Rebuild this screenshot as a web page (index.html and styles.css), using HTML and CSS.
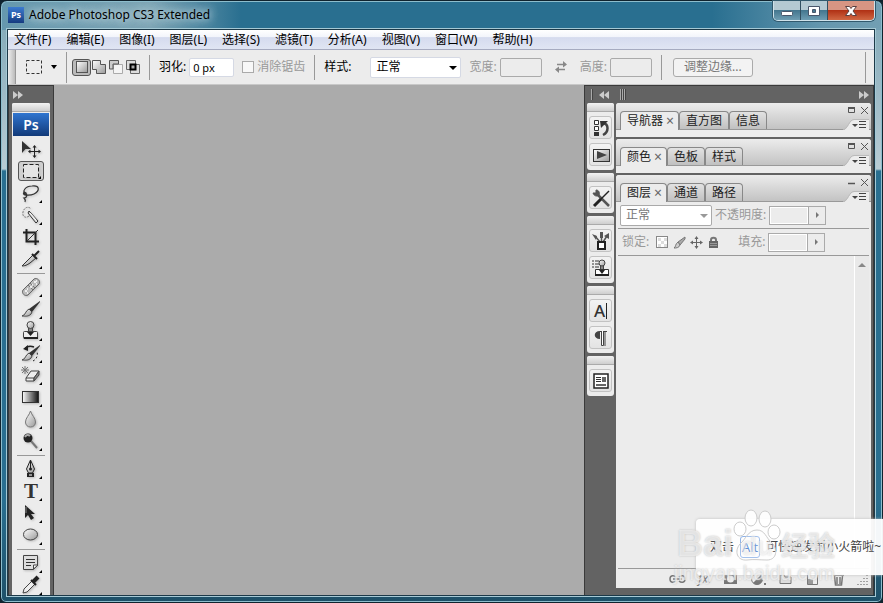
FILE: index.html
```html
<!DOCTYPE html>
<html lang="zh-CN">
<head>
    <meta charset="UTF-8">
    <meta name="viewport" content="width=device-width, initial-scale=1.0">
    <title>Adobe Photoshop CS3 Extended</title>
    <link rel="stylesheet" href="styles.css">
</head>
<body>
    <!-- Shared gradients -->
    <svg class="defs" width="0" height="0" aria-hidden="true">
        <defs>
            <linearGradient id="ramp"><stop offset="0" stop-color="#fff"/><stop offset="1" stop-color="#111"/></linearGradient>
            <linearGradient id="metal" x1="0" y1="0" x2="1" y2="1"><stop offset="0" stop-color="#fff"/><stop offset="1" stop-color="#999"/></linearGradient>
        </defs>
    </svg>

    <div class="window">
        <header class="titlebar">
            <span class="app-icon">Ps</span>
            <h1>Adobe Photoshop CS3 Extended</h1>
            <div class="window-controls">
                <button type="button" class="win-btn" aria-label="最小化"><svg width="14" height="14" viewBox="0 0 14 14"><rect x="1.500" y="7.500" width="11" height="4" rx="1" fill="#fff" stroke="#49566a"/></svg></button>
                <button type="button" class="win-btn" aria-label="最大化"><svg width="14" height="14" viewBox="0 0 14 14"><path fill-rule="evenodd" d="M1.500 2.500h11v9h-11zM5.500 5.500v3h3v-3z" fill="#fff" stroke="#49566a"/></svg></button>
                <button type="button" class="win-btn win-close" aria-label="关闭"><svg width="14" height="14" viewBox="0 0 14 14"><path d="M1.500 2.500h4l1.500 2 1.500-2h4l-3.500 4.500 3.500 4.500h-4l-1.500-2-1.500 2h-4l3.500-4.500z" fill="#fff" stroke="#5b4040"/></svg></button>
            </div>
        </header>

        <div class="client">
            <nav class="menubar">
                <a href="#">文件(F)</a>
                <a href="#">编辑(E)</a>
                <a href="#">图像(I)</a>
                <a href="#">图层(L)</a>
                <a href="#">选择(S)</a>
                <a href="#">滤镜(T)</a>
                <a href="#">分析(A)</a>
                <a href="#">视图(V)</a>
                <a href="#">窗口(W)</a>
                <a href="#">帮助(H)</a>
            </nav>

            <section class="options">
                <span class="gripper"></span>
                <button type="button" class="preset" aria-label="工具预设">
                    <svg width="18" height="16" viewBox="0 0 18 16"><rect x="1.500" y="1.500" width="15" height="13" fill="none" stroke="#333" stroke-dasharray="3 2"/></svg>
                    <span class="arrow-down"></span>
                </button>
                <span class="divider tall"></span>
                <div class="modes">
                    <button type="button" class="mode selected" aria-label="新选区"><svg width="14" height="14" viewBox="0 0 14 14"><rect x="1.500" y="1.500" width="11" height="11" fill="url(#metal)" stroke="#555"/></svg></button>
                    <button type="button" class="mode" aria-label="添加到选区"><svg width="14" height="14" viewBox="0 0 14 14"><path d="M.5.5h8v4h5v9h-9v-4h-4z" fill="url(#metal)" stroke="#555"/></svg></button>
                    <button type="button" class="mode" aria-label="从选区减去"><svg width="14" height="14" viewBox="0 0 14 14"><path d="M4.500 4.500h9v9h-9z" fill="#f4f4f4" stroke="#aaa"/><path d="M.5.5h9v3.500h-5.500v5h-3.500z" fill="#ccc" stroke="#555"/></svg></button>
                    <button type="button" class="mode" aria-label="与选区交叉"><svg width="14" height="14" viewBox="0 0 14 14"><path d="M.5.5h9v9h-9zM4.500 4.500h9v9h-9z" fill="#ddd" stroke="#666"/><path d="M4.500 4.500h5v5h-5z" fill="#aaa" stroke="#000" stroke-width="2"/></svg></button>
                </div>
                <span class="divider"></span>
                <div class="field">
                    <label for="feather">羽化:</label>
                    <input type="text" id="feather" class="feather" value="0 px">
                </div>
                <div class="field check off">
                    <input type="checkbox" id="antialias" disabled>
                    <label for="antialias">消除锯齿</label>
                </div>
                <span class="divider"></span>
                <div class="field style-field">
                    <label for="style">样式:</label>
                    <span class="select"><select id="style"><option>正常</option></select></span>
                </div>
                <div class="field size off">
                    <label for="width">宽度:</label>
                    <input type="text" id="width" disabled>
                </div>
                <button type="button" class="swap" aria-label="高度和宽度互换" disabled><svg width="14" height="14" viewBox="0 0 14 14"><path d="M3 4.500h8M11 9.500H3" stroke="#888" stroke-width="1.500"/><path d="M9 1l4 3.500-4 3zM5 6.500L1 9.500l4 3.500z" fill="#888"/></svg></button>
                <div class="field size off">
                    <label for="height">高度:</label>
                    <input type="text" id="height" disabled>
                </div>
                <span class="divider"></span>
                <button type="button" class="refine" disabled>调整边缘...</button>
                <span class="divider tall last"></span>
            </section>

            <main class="workspace">
                <aside class="toolbox">
                    <button type="button" class="collapse" aria-label="展开面板"><svg width="10" height="8" viewBox="0 0 10 8"><path d="M0 0l5 4-5 4zM5 0l5 4-5 4z" fill="#ccc"/></svg></button>
                    <div class="tools">
                        <span class="handle"></span>
                        <span class="ps">Ps</span>
                        <button type="button" class="tool" aria-label="移动"><svg viewBox="0 0 22 22"><path d="M2 3v12l3.500-4H11z" fill="#333"/><path d="M14.500 8v11M9 13.500h11" stroke="#222"/><path d="M12.500 9.500l2-2.500 2 2.500zM12.500 17.500l2 2.500 2-2.500zM10.500 11.500L8 13.500l2.500 2zM18.500 11.500l2.500 2-2.500 2z" fill="#222"/></svg></button>
                        <button type="button" class="tool more selected" aria-label="矩形选框"><svg viewBox="0 0 22 22"><rect x="3.500" y="4.500" width="15" height="13" fill="#e4e4e4" stroke="#222" stroke-dasharray="4 2"/></svg></button>
                        <button type="button" class="tool more" aria-label="套索"><svg viewBox="0 0 22 22" fill="none"><path d="M6 13C1 9 6 4 12 4c8-1 8 5 2 8-4 2-8 1-9 1-3-1-1-4 1-2 2 3 0 5-2 5 1 1 2 2 1 4" stroke="#333" stroke-width="1.200"/></svg></button>
                        <button type="button" class="tool more" aria-label="快速选择"><svg viewBox="0 0 22 22"><path d="M9 12c-4 3-7 0-6-4 1-5 6-6 8-3" fill="none" stroke="#777" stroke-dasharray="2 1"/><path d="M9 7l9 10-2 2L8 9z" fill="#ddd" stroke="#333"/><path d="M10 9l6 7" stroke="#fff"/></svg></button>
                        <button type="button" class="tool" aria-label="裁剪"><svg viewBox="0 0 22 22" fill="none"><path d="M6.500 3v12.500H19M3 6.500h12.500V19" stroke="#222" stroke-width="2"/><path d="M7 15L18 4" stroke="#333"/></svg></button>
                        <button type="button" class="tool more" aria-label="切片"><svg viewBox="0 0 22 22"><path d="M2 18L13 7l3 3-6 5c-3 2-5 3-8 3z" fill="url(#metal)" stroke="#333"/><path d="M12 6l5 5M14 8l5-5" stroke="#222" stroke-width="2"/></svg></button>
                        <hr>
                        <button type="button" class="tool more" aria-label="修复画笔"><svg viewBox="0 0 22 22"><path d="M3 14L14 3c3-2 7 2 5 5L8 19c-3 2-7-2-5-5z" fill="#bbb" stroke="#666"/><path d="M8 9l5 5M10 7l5 5" stroke="#777"/><path d="M5 15h2M7 17h1M7 13h1M10 11h2M12 9h1M14 6h2M16 8h1M16 5h1" stroke="#fff" stroke-width="1.500"/></svg></button>
                        <button type="button" class="tool more" aria-label="画笔"><svg viewBox="0 0 22 22"><path d="M20 3L9 11l3 3 8-10z" fill="#333"/><path d="M9 11l3 3-1 2c-3 3-6 2-9 2 4-1 3-5 7-7z" fill="url(#metal)" stroke="#444"/></svg></button>
                        <button type="button" class="tool more" aria-label="仿制图章"><svg viewBox="0 0 22 22"><path d="M8.500 7h4v5h-4z" fill="#888" stroke="#444"/><circle cx="10.500" cy="5" r="3.500" fill="url(#metal)" stroke="#444"/><rect x="3.500" y="11.500" width="14" height="7" rx="1" fill="#eee" stroke="#444"/><path d="M4 17h14v2H4zM7 12h7l-3.500 4z" fill="#222"/></svg></button>
                        <button type="button" class="tool more" aria-label="历史记录画笔"><svg viewBox="0 0 22 22"><path d="M20 3L9 11l3 3 8-10z" fill="#333"/><path d="M9 11l3 3-1 2c-3 3-6 2-9 2 4-1 3-5 7-7z" fill="url(#metal)" stroke="#444"/><path d="M5 7c2-3 6-3 9-2" fill="none" stroke="#222" stroke-width="1.500"/><path d="M13 19c4-2 5-6 4-10" fill="none" stroke="#222" stroke-dasharray="2 2"/><path d="M8 3v6L3 7z" fill="#222"/></svg></button>
                        <button type="button" class="tool more" aria-label="橡皮擦"><svg viewBox="0 0 22 22"><path d="M6 14l5-7h8l-5 7v3H6z" fill="#eee" stroke="#444"/><path d="M14 14l5-7v4l-5 6z" fill="#888" stroke="#444"/><path d="M6 14h8" stroke="#444"/><path d="M5 2v8M1 6h8M2 3l6 6M8 3L2 9" stroke="#777"/></svg></button>
                        <button type="button" class="tool more" aria-label="渐变"><svg viewBox="0 0 22 22"><rect x="2.500" y="5.500" width="16" height="11" fill="url(#ramp)" stroke="#333"/></svg></button>
                        <button type="button" class="tool more" aria-label="模糊"><svg viewBox="0 0 22 22"><path d="M10.500 3c1 4 5 7 5 11 0 3-2 5-5 5s-5-2-5-5c0-4 4-7 5-11z" fill="url(#metal)" stroke="#777"/></svg></button>
                        <button type="button" class="tool more" aria-label="减淡"><svg viewBox="0 0 22 22"><path d="M11 11l6 7" stroke="#777" stroke-width="2"/><circle cx="8" cy="8" r="4.500" fill="#222"/><path d="M5 7c1-2 3-3 5-1" fill="none" stroke="#aaa" stroke-width="2"/></svg></button>
                        <hr>
                        <button type="button" class="tool more" aria-label="钢笔"><svg viewBox="0 0 22 22"><path d="M10.500 2l-4 9 2 4h4l2-4z" fill="url(#metal)" stroke="#222"/><path d="M10.500 3v7" stroke="#222"/><circle cx="10.500" cy="11" r="1.500" fill="#222"/><path d="M7 15h7v4H7z" fill="#222"/><path d="M9 17h3" stroke="#fff"/></svg></button>
                        <button type="button" class="tool more type" aria-label="横排文字">T</button>
                        <button type="button" class="tool more" aria-label="路径选择"><svg viewBox="0 0 22 22"><path d="M5 3v13l3-3 3 5 3-2-3-4h4z" fill="#222"/><path d="M6 5v6" stroke="#888"/></svg></button>
                        <button type="button" class="tool more" aria-label="椭圆"><svg viewBox="0 0 22 22"><ellipse cx="10.500" cy="10.500" rx="7" ry="5.500" fill="url(#metal)" stroke="#444"/></svg></button>
                        <hr>
                        <button type="button" class="tool more" aria-label="注释"><svg viewBox="0 0 22 22"><path d="M3.500 3.500h14v10l-4 4h-10z" fill="#ddd" stroke="#444"/><path d="M13.500 17v-4H18z" fill="#fff" stroke="#444"/><path d="M6 7.500h9M6 10.500h9M6 13.500h5" stroke="#333"/></svg></button>
                        <button type="button" class="tool more" aria-label="吸管"><svg viewBox="0 0 22 22"><path d="M3 19l1-4 8-8 3 3-8 8z" fill="#eee" stroke="#444"/><path d="M11 6l5 5" stroke="#222" stroke-width="2"/><path d="M13 8l5-5" stroke="#222" stroke-width="4"/></svg></button>
                    </div>
                </aside>

                <div class="canvas"></div>

                <aside class="dock">
                    <div class="dock-icons">
                        <div class="dock-head">
                            <span class="bars"></span>
                            <button type="button" class="collapse" aria-label="展开停放"><svg width="10" height="8" viewBox="0 0 10 8"><path d="M5 0L0 4l5 4zM10 0L5 4l5 4z" fill="#ccc"/></svg></button>
                        </div>
                        <div class="icon-group">
                            <span class="handle"></span>
                            <button type="button" aria-label="历史记录"><svg viewBox="0 0 20 20"><path d="M3.500 2.500h4v4h-4zM3.500 8.500h4v4h-4z" fill="#fff" stroke="#333"/><path d="M3 14h5v4H3z" fill="#333"/><path d="M12 17c6-3 6-11 0-12" fill="none" stroke="#444" stroke-width="2.500"/><path d="M9 3h8l-7 7z" fill="#333"/></svg></button>
                            <button type="button" aria-label="动作"><svg viewBox="0 0 20 20"><rect x="2.500" y="4.500" width="16" height="12" fill="url(#metal)" stroke="#333"/><path d="M6 6v8l10-4z" fill="#444"/></svg></button>
                        </div>
                        <div class="icon-group">
                            <span class="handle"></span>
                            <button type="button" aria-label="工具预设面板"><svg viewBox="0 0 20 20"><path d="M5 5l13 13" stroke="#555" stroke-width="2.500"/><path d="M2 5c1 3 4 4 6 2 1-2 0-5-3-5v3z" fill="#555" stroke="#555"/><path d="M18 3l-8 8" stroke="#222" stroke-width="1.500"/><path d="M10 11l-7 7" stroke="#222" stroke-width="3"/></svg></button>
                        </div>
                        <div class="icon-group">
                            <span class="handle"></span>
                            <button type="button" aria-label="画笔面板"><svg viewBox="0 0 20 20"><path d="M9 11L4 5M10.500 11V3M12 11l4-6" stroke="#555" stroke-width="1.500"/><path d="M1 3l5 2-1 4zM9 1h3v6H9zM13 5l5-3v6z" fill="#555"/><path d="M7 11h7v7H7z" fill="#fff" stroke="#222" stroke-width="2"/></svg></button>
                            <button type="button" aria-label="仿制源"><svg viewBox="0 0 20 20"><path d="M1 3h2M1 6h2M1 9h2M4 3h4M4 6h4M4 9h4" stroke="#333"/><path d="M9.500 7h3v5h-3z" fill="#888" stroke="#444"/><circle cx="11" cy="5" r="3" fill="url(#metal)" stroke="#444"/><path d="M4.500 11.500h13v6h-13z" fill="#fff" stroke="#333"/><path d="M4 16h14v2H4zM8 12h6l-3 4z" fill="#222"/></svg></button>
                        </div>
                        <div class="icon-group">
                            <span class="handle"></span>
                            <button type="button" aria-label="字符"><span class="char">A</span></button>
                            <button type="button" aria-label="段落"><svg viewBox="0 0 20 20"><path d="M9 3h7v1H9zM9 3v8C2 11 2 3 9 3z" fill="#444"/><path d="M10.500 3v14.500h2V3M14 3v15" fill="#fff" stroke="#444"/></svg></button>
                        </div>
                        <div class="icon-group">
                            <span class="handle"></span>
                            <button type="button" aria-label="图层复合"><svg viewBox="0 0 20 20"><rect x="3" y="3" width="14" height="14" fill="#fff" stroke="#222" stroke-width="1.500"/><path d="M5 6.500h5M5 8.500h5M5 10.500h5" stroke="#333"/><path d="M11 6h4v5h-4zM5 13h10v2H5z" fill="#666"/></svg></button>
                        </div>
                    </div>

                    <div class="panels">
                        <div class="dock-head">
                            <span class="bars"></span>
                            <button type="button" class="collapse right" aria-label="折叠为图标"><svg width="10" height="8" viewBox="0 0 10 8"><path d="M0 0l5 4-5 4zM5 0l5 4-5 4z" fill="#ccc"/></svg></button>
                        </div>

                        <section class="panel">
                            <div class="tabs">
                                <button type="button" class="tab active">导航器 <span>×</span></button>
                                <button type="button" class="tab">直方图</button>
                                <button type="button" class="tab">信息</button>
                                <div class="panel-actions">
                                    <svg width="22" height="9" viewBox="0 0 22 9" fill="none" stroke="#555"><path d="M1.500 2v4.500h6V2M1 2.500h7"/><path d="M1 2h7" stroke-width="2"/><path d="M14 1l7 7M21 1l-7 7"/></svg>
                                    <svg width="26" height="12" viewBox="0 0 26 12"><path d="M0 12c5 0 6-10 11-10h15v10z" fill="#ececec"/><path d="M0 11.500C5 11.500 6 1.500 11 1.500h15" fill="none" stroke="#bbb"/><path d="M9 6h6l-3 3z" fill="#444"/><path d="M16 3.500h7M16 6.500h7M16 9.500h7" stroke="#444"/></svg>
                                </div>
                            </div>
                        </section>

                        <section class="panel">
                            <div class="tabs">
                                <button type="button" class="tab active">颜色 <span>×</span></button>
                                <button type="button" class="tab">色板</button>
                                <button type="button" class="tab">样式</button>
                                <div class="panel-actions">
                                    <svg width="22" height="9" viewBox="0 0 22 9" fill="none" stroke="#555"><path d="M1.500 2v4.500h6V2M1 2.500h7"/><path d="M1 2h7" stroke-width="2"/><path d="M14 1l7 7M21 1l-7 7"/></svg>
                                    <svg width="26" height="12" viewBox="0 0 26 12"><path d="M0 12c5 0 6-10 11-10h15v10z" fill="#ececec"/><path d="M0 11.500C5 11.500 6 1.500 11 1.500h15" fill="none" stroke="#bbb"/><path d="M9 6h6l-3 3z" fill="#444"/><path d="M16 3.500h7M16 6.500h7M16 9.500h7" stroke="#444"/></svg>
                                </div>
                            </div>
                        </section>

                        <section class="panel layers">
                            <div class="tabs">
                                <button type="button" class="tab active">图层 <span>×</span></button>
                                <button type="button" class="tab">通道</button>
                                <button type="button" class="tab">路径</button>
                                <div class="panel-actions">
                                    <svg width="22" height="9" viewBox="0 0 22 9" fill="none" stroke="#555"><path d="M1 5.500h7" stroke-width="1.500"/><path d="M14 1l7 7M21 1l-7 7"/></svg>
                                    <svg width="26" height="12" viewBox="0 0 26 12"><path d="M0 12c5 0 6-10 11-10h15v10z" fill="#ececec"/><path d="M0 11.500C5 11.500 6 1.500 11 1.500h15" fill="none" stroke="#bbb"/><path d="M9 6h6l-3 3z" fill="#444"/><path d="M16 3.500h7M16 6.500h7M16 9.500h7" stroke="#444"/></svg>
                                </div>
                            </div>
                            <div class="layer-row">
                                <span class="select blend"><select aria-label="混合模式" disabled><option>正常</option></select></span>
                                <label for="opacity">不透明度:</label>
                                <span class="stepper"><input type="text" id="opacity" disabled><button type="button" aria-label="调整不透明度" disabled><i></i></button></span>
                            </div>
                            <div class="layer-row lock-row">
                                <span class="lock-label">锁定:</span>
                                <div class="locks">
                                    <button type="button" aria-label="锁定透明像素" disabled><svg width="13" height="13" viewBox="0 0 13 13"><rect x=".5" y=".5" width="11" height="11" fill="#fff" stroke="#888"/><path d="M2 2h3v3H2zM8 2h3v3H8zM5 5h3v3H5zM2 8h3v3H2zM8 8h3v3H8z" fill="#ddd"/></svg></button>
                                    <button type="button" aria-label="锁定图像像素" disabled><svg width="13" height="13" viewBox="0 0 13 13"><path d="M12 1L5 6l2 3 5-6z" fill="#aaa" stroke="#777"/><path d="M5 6l2 3c-1 3-4 3-6 3 2-1 1-4 4-6z" fill="#ccc" stroke="#777"/></svg></button>
                                    <button type="button" aria-label="锁定位置" disabled><svg width="13" height="13" viewBox="0 0 13 13"><path d="M6.500 1v11M1 6.500h11" stroke="#666"/><path d="M4.500 3l2-3 2 3zM4.500 10l2 3 2-3zM3 4.500l-3 2 3 2zM10 4.500l3 2-3 2z" fill="#666"/></svg></button>
                                    <button type="button" aria-label="锁定全部" disabled><svg width="13" height="13" viewBox="0 0 13 13"><path d="M4 6V4c0-3 5-3 5 0v2" fill="none" stroke="#777" stroke-width="2"/><path d="M2 5h9v7H2z" fill="#666"/><path d="M3 7.500h7M3 9.500h7" stroke="#999"/></svg></button>
                                </div>
                                <label for="fill">填充:</label>
                                <span class="stepper"><input type="text" id="fill" disabled><button type="button" aria-label="调整填充" disabled><i></i></button></span>
                            </div>
                            <div class="layer-list"><span class="scroll"><i></i></span></div>
                            <div class="layer-foot">
                                <button type="button" aria-label="链接图层" disabled><svg width="17" height="14" viewBox="0 0 17 14" fill="none" stroke="#777" stroke-width="1.500"><path d="M7 5c-2-2-6-2-6 2s4 4 6 2M10 5c2-2 6-2 6 2s-4 4-6 2M4 7h9"/></svg></button>
                                <button type="button" class="fx" aria-label="图层样式" disabled>fx.</button>
                                <button type="button" aria-label="图层蒙版" disabled><svg width="15" height="14" viewBox="0 0 15 14"><path d="M1 2h13v10H1z" fill="#777"/><circle cx="7.500" cy="7" r="3.500" fill="#eee"/></svg></button>
                                <button type="button" aria-label="调整图层" disabled><svg width="16" height="14" viewBox="0 0 16 14"><circle cx="7" cy="7" r="5.500" fill="#eee" stroke="#777"/><path d="M3 11L11 3a5.500 5.500 0 0 1-8 8z" fill="#777"/><path d="M14 11h2v2h-2z" fill="#777"/></svg></button>
                                <button type="button" aria-label="新建组" disabled><svg width="15" height="14" viewBox="0 0 15 14"><path d="M2 11.500V3h4l1 2h6v6.500z" fill="#ddd" stroke="#777"/></svg></button>
                                <button type="button" aria-label="新建图层" disabled><svg width="15" height="14" viewBox="0 0 15 14"><path d="M2.500 1.500h10v11h-10z" fill="#eee" stroke="#777"/><path d="M3 12V7h5v5z" fill="#999"/></svg></button>
                                <button type="button" aria-label="删除图层" disabled><svg width="13" height="14" viewBox="0 0 13 14"><path d="M1 3h11M5 1h3M2.500 4l1 9h6l1-9M5 5v7M8 5v7" fill="none" stroke="#777" stroke-width="1.500"/></svg></button>
                                <svg class="grip" width="12" height="12" viewBox="0 0 12 12"><path d="M10 2v10M7 5v7M4 8v4M1 11v1" stroke="#888" stroke-dasharray="1 2" stroke-width="1.500"/></svg>
                            </div>
                        </section>
                    </div>
                </aside>
            </main>
        </div>
    </div>

    <div class="toast"><span>双击</span><kbd>Alt</kbd><span>可快速发射小火箭啦~</span></div>

    <div class="watermark">
        <div class="brand">
            <span>Bai</span>
            <div class="paw">
                <svg width="48" height="54" viewBox="0 0 48 54" fill="#fff" fill-opacity=".9" stroke="#ccc"><ellipse cx="18" cy="9" rx="6" ry="8"/><ellipse cx="32" cy="10" rx="6" ry="8"/><ellipse cx="7" cy="20" rx="6" ry="7"/><ellipse cx="41" cy="23" rx="6" ry="7"/><path d="M24 21c8 0 9 8 15 13 6 6 5 17-5 17-7 0-13-1-20 0-10 1-13-9-7-16 6-5 8-14 17-14z" fill-opacity=".2"/></svg>
                <b>du</b>
            </div>
            <span class="cn">经验</span>
        </div>
        <div class="url">jingyan.baidu.com</div>
    </div>
</body>
</html>
```
FILE: styles.css
```css
* {
    box-sizing: border-box;
}
body {
    margin: 0;
    height: 100vh;
    overflow: hidden;
    position: relative;
    background: #10232e;
    font-family: "Noto Sans", "Noto Sans CJK SC", sans-serif;
    font-size: 12px;
    line-height: 16px;
    color: #000;
}
button, input, select {
    font: inherit;
    color: inherit;
    margin: 0;
    padding: 0;
}
button {
    display: flex;
    align-items: center;
    justify-content: center;
    background: none;
    border: 0;
    flex: none;
}
svg {
    display: block;
    flex: none;
}
.defs {
    position: absolute;
}

/* Window frame */
.window {
    height: 100vh;
    display: flex;
    flex-direction: column;
    padding: 0 7px 6px 6px;
    border: 1px solid #10232e;
    border-radius: 7px 7px 6px 6px;
    box-shadow: inset 0 0 0 1px #8dbdcc;
    background:
        linear-gradient(90deg, #6598ae 0, #7da5b5 150px, #296f90 240px, #296f90 calc(100% - 170px), #6597ae calc(100% - 60px), #729fb3 100%) 0 0 / 100% 29px no-repeat,
        linear-gradient(#7da5b5 0, #b8ccd4 168px, #296f90 170px, #296f90 500px, #1e5068 100%);
}
.titlebar {
    display: flex;
    align-items: center;
    height: 28px;
    flex: none;
    gap: 5px;
}
.titlebar h1 {
    margin: 0;
    font-size: 12px;
    font-weight: normal;
    text-shadow: 0 0 8px #cfe0e6, 0 0 8px #cfe0e6;
}
.app-icon {
    width: 16px;
    height: 16px;
    margin-left: 1px;
    background: linear-gradient(#3c7bd0, #153b80);
    color: #fff;
    font-size: 9px;
    font-weight: bold;
    text-align: center;
}
.window-controls {
    display: flex;
    align-self: flex-start;
    height: 20px;
    margin-left: auto;
    border: 1px solid #cfe2ea;
    border-top: 0;
    border-radius: 0 0 5px 5px;
    box-shadow: 0 0 0 1px #31596d;
    overflow: hidden;
}
.win-btn {
    width: 27px;
    border-right: 1px solid #314f60;
    background: linear-gradient(#b4c9d2 45%, #44778f 50%, #6e9db2);
}
.win-close {
    width: 46px;
    border-right: 0;
    background: linear-gradient(#d79583 45%, #b13216 50%, #d06844);
}
.client {
    flex: 1;
    min-height: 0;
    display: flex;
    flex-direction: column;
    border: 1px solid #1c3948;
    box-shadow: 0 0 0 1px #a5c9d5;
    background: #ececec;
}

/* Menu and options bars */
.menubar {
    display: flex;
    flex: none;
    gap: 15px;
    height: 20px;
    padding: 2px 6px;
    border-bottom: 1px solid #a6abc0;
    background: linear-gradient(#fff, #f3f5fb 35%, #d5dbee 40%, #e0e5f3);
}
.menubar a {
    color: #000;
    text-decoration: none;
    white-space: nowrap;
}
.options {
    display: flex;
    align-items: center;
    flex: none;
    height: 35px;
    border-bottom: 1px solid #c8c8c8;
    background: #ececec;
    white-space: nowrap;
}
.gripper {
    width: 8px;
    height: 100%;
    border-right: 1px solid #999;
    background: linear-gradient(90deg, #eee, #bbb);
}
.preset {
    gap: 8px;
    width: 50px;
}
.arrow-down {
    border: 3px solid transparent;
    border-top: 4px solid #000;
    border-bottom: 0;
}
.divider {
    width: 1px;
    height: 25px;
    margin: 0 9px;
    background: #999;
}
.divider.tall {
    height: 31px;
    margin: 0 5px 0 0;
}
.divider.last {
    margin: 0 8px 0 auto;
}
.modes {
    display: flex;
    align-items: center;
    gap: 3px;
}
.mode.selected {
    width: 19px;
    height: 17px;
    margin-right: -2px;
    border: 1px solid #555;
    border-radius: 3px;
    background: #bbb;
}
.field {
    display: flex;
    align-items: center;
    gap: 3px;
}
.field input[type="text"] {
    width: 42px;
    height: 19px;
    border: 1px solid #aaa;
    border-radius: 2px;
    background: #ececec;
}
.field input.feather {
    width: 45px;
    padding-left: 3px;
    border-color: #d5d9e4;
    background: #fff;
    font-size: 11px;
}
.off {
    color: #999;
}
.check {
    margin-left: 8px;
}
.check input {
    appearance: none;
    width: 12px;
    height: 12px;
    border: 1px solid #aaa;
    background: #f8f8f8;
}
.select {
    position: relative;
    display: flex;
}
.select::after {
    content: "";
    position: absolute;
    right: 4px;
    top: 9px;
    border: 4px solid transparent;
    border-top: 4px solid #000;
    border-bottom: 0;
    pointer-events: none;
}
.select select {
    appearance: none;
    width: 91px;
    height: 21px;
    padding-left: 5px;
    border: 1px solid #d5d9e4;
    border-radius: 2px;
    background: #fff;
    opacity: 1;
}
.style-field {
    gap: 19px;
}
.size {
    margin-left: 8px;
}
.swap {
    width: 14px;
    margin: 0 4px 0 12px;
}
.refine {
    width: 80px;
    height: 19px;
    margin-left: 2px;
    border: 1px solid #aaa;
    border-radius: 3px;
    background: #f3f3f3;
    color: #777;
}

/* Workspace */
.workspace {
    flex: 1;
    min-height: 0;
    display: flex;
    background: #ababab;
}
.toolbox {
    display: flex;
    flex-direction: column;
    flex: none;
    width: 46px;
    padding: 0 3px;
    border: 1px solid #3a3a3a;
    border-bottom: 0;
    background: #636363;
    overflow: hidden;
}
.collapse {
    width: 12px;
    height: 17px;
}
.handle {
    display: block;
    width: 100%;
    height: 9px;
    border-bottom: 1px solid #aaa;
    border-radius: 2px 2px 0 0;
    background: linear-gradient(#f2f2f2, #cecece);
}
.tools {
    display: flex;
    flex-direction: column;
    align-items: center;
    flex: 1;
    background: #ececec;
    border-radius: 2px 2px 0 0;
}
.ps {
    width: 36px;
    height: 23px;
    margin: 1px 0 2px;
    background: linear-gradient(#2f75d0, #123a79);
    color: #fff;
    font-size: 14px;
    font-weight: 600;
    line-height: 23px;
    text-align: center;
}
.tool {
    position: relative;
    width: 26px;
    height: 22px;
}
.tool svg {
    width: 22px;
    height: 22px;
    filter: drop-shadow(1px 1px 1px #bbb);
}
.tool.selected {
    height: 20px;
    margin: 1px 0;
    border: 1px solid #555;
    border-radius: 3px;
    background: #d0d0d0;
}
.tool.more::after {
    content: "";
    position: absolute;
    right: 2px;
    bottom: 1px;
    border-left: 3px solid transparent;
    border-bottom: 3px solid #000;
}
.tool.type {
    font-family: "Liberation Serif", serif;
    font-size: 21px;
    font-weight: bold;
    color: #333;
}
.tools hr {
    width: 28px;
    flex: none;
    height: 1px;
    margin: 3px 0 2px;
    border: 0;
    background: #999;
}
.canvas {
    flex: 1;
}
.dock {
    display: flex;
    flex: none;
    width: 290px;
    gap: 2px;
    padding: 0 2px 7px;
    border: 1px solid #3a3a3a;
    border-bottom: 0;
    background: #636363;
}
.dock-head {
    display: flex;
    align-items: center;
    gap: 5px;
    flex: none;
    height: 17px;
    padding: 0 4px;
}
.bars {
    width: 6px;
    height: 11px;
    background: repeating-linear-gradient(90deg, #aaa 0 1px, #444 1px 2px);
}
.collapse.right {
    margin-left: auto;
    margin-right: -3px;
}
.dock-icons {
    display: flex;
    flex-direction: column;
    gap: 3px;
    width: 27px;
    flex: none;
}
.dock-icons .dock-head {
    margin-bottom: -3px;
}
.icon-group {
    display: flex;
    flex-direction: column;
    align-items: center;
    gap: 4px;
    padding-bottom: 4px;
    border-radius: 3px;
    background: #ececec;
}
.icon-group button {
    width: 23px;
    height: 23px;
    border: 1px solid #c2c2c2;
    border-radius: 3px;
    background: linear-gradient(#f3f3f3, #e3e3e3);
}
.icon-group svg {
    width: 20px;
    height: 20px;
}
.char {
    padding-right: 1px;
    border-right: 1px solid #222;
    font-size: 17px;
    font-weight: 500;
    color: #333;
}

/* Panels */
.panels {
    flex: 1;
    min-width: 0;
    display: flex;
    flex-direction: column;
    gap: 2px;
}
.panels .dock-head {
    margin-bottom: -2px;
}
.panel {
    flex: none;
    min-height: 34px;
    border-radius: 3px 3px 0 0;
    background: #ececec;
}
.tabs {
    display: flex;
    align-items: flex-end;
    height: 27px;
    padding-left: 4px;
    border-bottom: 1px solid #999;
    border-radius: 3px 3px 0 0;
    background: linear-gradient(#ececec, #c3c3c3);
}
.tab {
    height: 18px;
    padding: 0 6px;
    border: 1px solid #888;
    border-bottom: 0;
    border-radius: 4px 4px 0 0;
    background: linear-gradient(#e2e2e2, #c0c0c0);
    color: #222;
    white-space: nowrap;
}
.tab.active {
    height: 19px;
    margin-bottom: -1px;
    padding: 0 4px 0 6px;
    background: #ececec;
}
.tab span {
    margin-left: 3px;
    color: #666;
    font-size: 14px;
}
.panel-actions {
    display: flex;
    flex-direction: column;
    align-items: flex-end;
    gap: 3px;
    margin-left: auto;
    margin-bottom: -1px;
    padding-right: 2px;
}
.panel.layers {
    flex: 1;
    display: flex;
    flex-direction: column;
    min-height: 0;
}
.layer-row {
    display: flex;
    align-items: center;
    gap: 3px;
    height: 27px;
    flex: none;
    margin: 0 2px;
    padding: 0 2px;
    border-bottom: 1px solid #999;
    color: #999;
    white-space: nowrap;
}
.blend select {
    width: 92px;
    border: 1px solid #aaa;
    color: #777;
}
.blend::after {
    border-top-color: #999;
}
.stepper {
    display: flex;
    height: 19px;
    width: 57px;
    border: 1px solid #aaa;
}
.stepper input {
    flex: 1;
    min-width: 0;
    border: 1px solid #fff;
    background: #ececec;
}
.stepper button {
    width: 17px;
    border-left: 1px solid #aaa;
}
.stepper i {
    border: 3px solid transparent;
    border-left: 3px solid #777;
    border-right: 0;
}
.lock-label {
    margin-left: 2px;
}
.locks {
    display: flex;
    gap: 4px;
    margin: 0 15px 0 4px;
}
.layer-list {
    flex: 1;
    display: flex;
    justify-content: flex-end;
    margin: 0 2px;
    border-bottom: 1px solid #999;
}
.scroll {
    width: 15px;
    padding: 7px 3px;
    border-left: 1px solid #fff;
    background: #e9e9e9;
}
.scroll i {
    display: block;
    width: 8px;
    border: 4px solid transparent;
    border-top: 0;
    border-bottom: 4px solid #888;
}
.layer-foot {
    display: flex;
    align-items: center;
    justify-content: flex-end;
    gap: 12px;
    height: 19px;
    flex: none;
    padding-right: 2px;
}
.fx {
    font-style: italic;
    color: #777;
}

/* Overlays */
.toast {
    position: absolute;
    right: 0;
    bottom: 28px;
    display: flex;
    align-items: center;
    gap: 6px;
    width: 187px;
    height: 56px;
    padding-left: 14px;
    border-radius: 4px 0 0 4px;
    background: rgba(255, 255, 255, 0.95);
    box-shadow: 0 0 3px #bbb;
    color: #444;
    white-space: nowrap;
}
.toast kbd {
    padding: 2px 1px;
    border: 1px solid #8fb3e8;
    border-radius: 3px;
    color: #3873d0;
    font-family: "Open Sans", sans-serif;
    font-size: 13px;
}
.watermark {
    position: absolute;
    right: 48px;
    bottom: 20px;
    color: rgba(255, 255, 255, 0.6);
    text-shadow: 0 0 2px #bbb;
    pointer-events: none;
}
.brand {
    display: flex;
    align-items: flex-end;
    justify-content: flex-end;
    height: 54px;
    font: bold 36px/38px "Liberation Sans", sans-serif;
}
.brand .cn {
    font: bold 27px/36px "Noto Sans CJK SC", sans-serif;
}
.paw {
    display: grid;
    justify-items: center;
    align-items: end;
}
.paw svg, .paw b {
    grid-area: 1 / 1;
}
.paw b {
    font-size: 26px;
    line-height: 34px;
    opacity: 0.6;
}
.url {
    font: 20px/20px "Liberation Sans", sans-serif;
    text-align: right;
}
```
